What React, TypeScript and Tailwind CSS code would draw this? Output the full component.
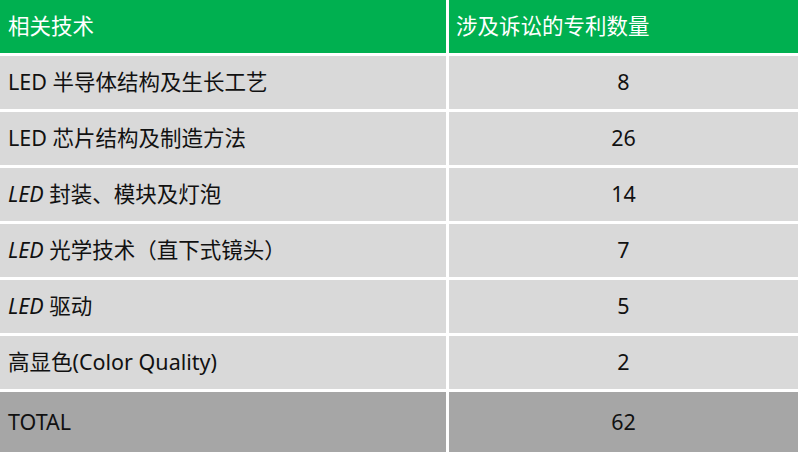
const rows: { label: React.ReactNode; count: number }[] = [
  { label: <>LED 半导体结构及生长工艺</>, count: 8 },
  { label: <>LED 芯片结构及制造方法</>, count: 26 },
  { label: <><i>LED</i> 封装、模块及灯泡</>, count: 14 },
  { label: <><i>LED</i> 光学技术（直下式镜头）</>, count: 7 },
  { label: <><i>LED</i> 驱动</>, count: 5 },
  { label: <>高显色(Color Quality)</>, count: 2 },
];

export default function App() {
  return (
    <div
      className="w-[800px] h-[452px] bg-white pr-[2px] overflow-hidden text-[21.5px] text-[#111]"
      style={{ fontFamily: '"Noto Sans", "Noto Sans CJK SC", sans-serif' }}
    >
      <div className="grid grid-cols-[446px_1fr] gap-[3px]">
        <div className="h-[53px] bg-[#00b050] text-white flex items-center pl-2">相关技术</div>
        <div className="h-[53px] bg-[#00b050] text-white flex items-center pl-[7px]">涉及诉讼的专利数量</div>
        {rows.map((r, i) => (
          <Row key={i} label={r.label} count={r.count} />
        ))}
        <div className="h-[60px] bg-[#a6a6a6] flex items-center pl-2">TOTAL</div>
        <div className="h-[60px] bg-[#a6a6a6] flex items-center justify-center">62</div>
      </div>
    </div>
  );
}

function Row({ label, count }: { label: React.ReactNode; count: number }) {
  return (
    <>
      <div className="h-[53px] bg-[#d9d9d9] flex items-center pl-2">
        <span className="whitespace-pre">{label}</span>
      </div>
      <div className="h-[53px] bg-[#d9d9d9] flex items-center justify-center">{count}</div>
    </>
  );
}
